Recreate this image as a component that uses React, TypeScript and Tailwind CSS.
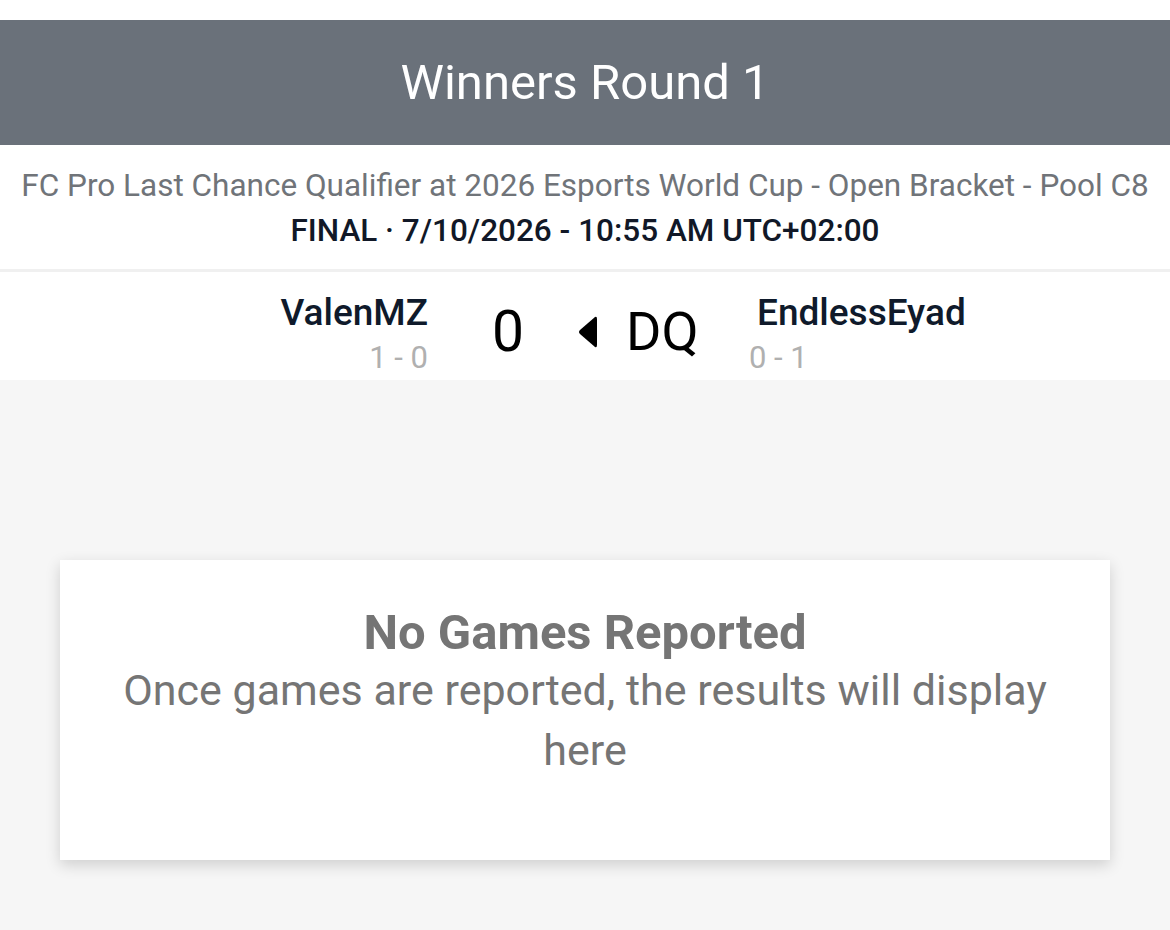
import React from "react";

const font = { fontFamily: "Roboto, 'Noto Sans', sans-serif" };

function Player({ name, record, side }: { name: string; record: string; side: "left" | "right" }) {
  return (
    <div className={side === "left" ? "flex flex-col items-end" : "flex flex-col items-start"}>
      <div className="text-[37px] font-medium leading-[40px] text-[#0f1a2b]">{name}</div>
      <div
        className={
          side === "left"
            ? "text-[31px] leading-[36px] text-[#b0b0b0] mt-[7px]"
            : "text-[31px] leading-[36px] text-[#b0b0b0] mt-[7px] -ml-[8px]"
        }
      >
        {record}
      </div>
    </div>
  );
}

export default function App() {
  return (
    <div className="w-[1170px] h-[930px] bg-[#f6f6f6] flex flex-col" style={font}>
      <div className="h-[20px] bg-white" />
      {/* Header */}
      <div className="h-[125px] bg-[#6a717a] flex items-center justify-center">
        <h1 className="text-[49px] text-white leading-none">Winners Round 1</h1>
      </div>

      {/* Event info */}
      <div className="bg-white h-[124px] flex flex-col items-center pt-[22px]">
        <div className="text-[31.5px] leading-[38px] text-[#707479] whitespace-nowrap">
          FC Pro Last Chance Qualifier at 2026 Esports World Cup - Open Bracket - Pool C8
        </div>
        <div className="text-[31.5px] leading-[38px] font-medium text-[#111827] mt-[7px]">
          FINAL · 7/10/2026 - 10:55 AM UTC+02:00
        </div>
      </div>
      <div className="h-[3px] bg-[#f0f0f0]" />

      {/* Match */}
      <div className="bg-white h-[108px] flex justify-center pt-[21px]">
        <div className="w-[428px] flex justify-end">
          <Player name="ValenMZ" record="1 - 0" side="left" />
        </div>
        <div className="w-[329px] flex items-center pl-[64px] pb-[10px]">
          <span className="text-[57px] leading-none text-black">0</span>
          <svg width="20" height="32" viewBox="0 0 20 32" className="ml-[54px] mr-[28px]">
            <path d="M17 1 Q19 0 19 3 L19 29 Q19 32 17 31 L2 18 Q0 16 2 14 Z" fill="#000" />
          </svg>
          <span className="text-[54px] leading-none text-black">DQ</span>
        </div>
        <div className="w-[413px] flex justify-start">
          <Player name="EndlessEyad" record="0 - 1" side="right" />
        </div>
      </div>

      {/* Games */}
      <div className="flex-1 px-[60px] pt-[180px]">
        <div className="bg-white h-[300px] shadow-[0_5px_14px_rgba(0,0,0,0.16)] flex flex-col items-center pt-[46px] px-[40px] text-center">
          <div className="text-[49px] font-bold leading-[54px] text-[#757575]">No Games Reported</div>
          <div className="text-[43px] leading-[60px] text-[#757575] max-w-[970px]">
            Once games are reported, the results will display here
          </div>
        </div>
      </div>
    </div>
  );
}
